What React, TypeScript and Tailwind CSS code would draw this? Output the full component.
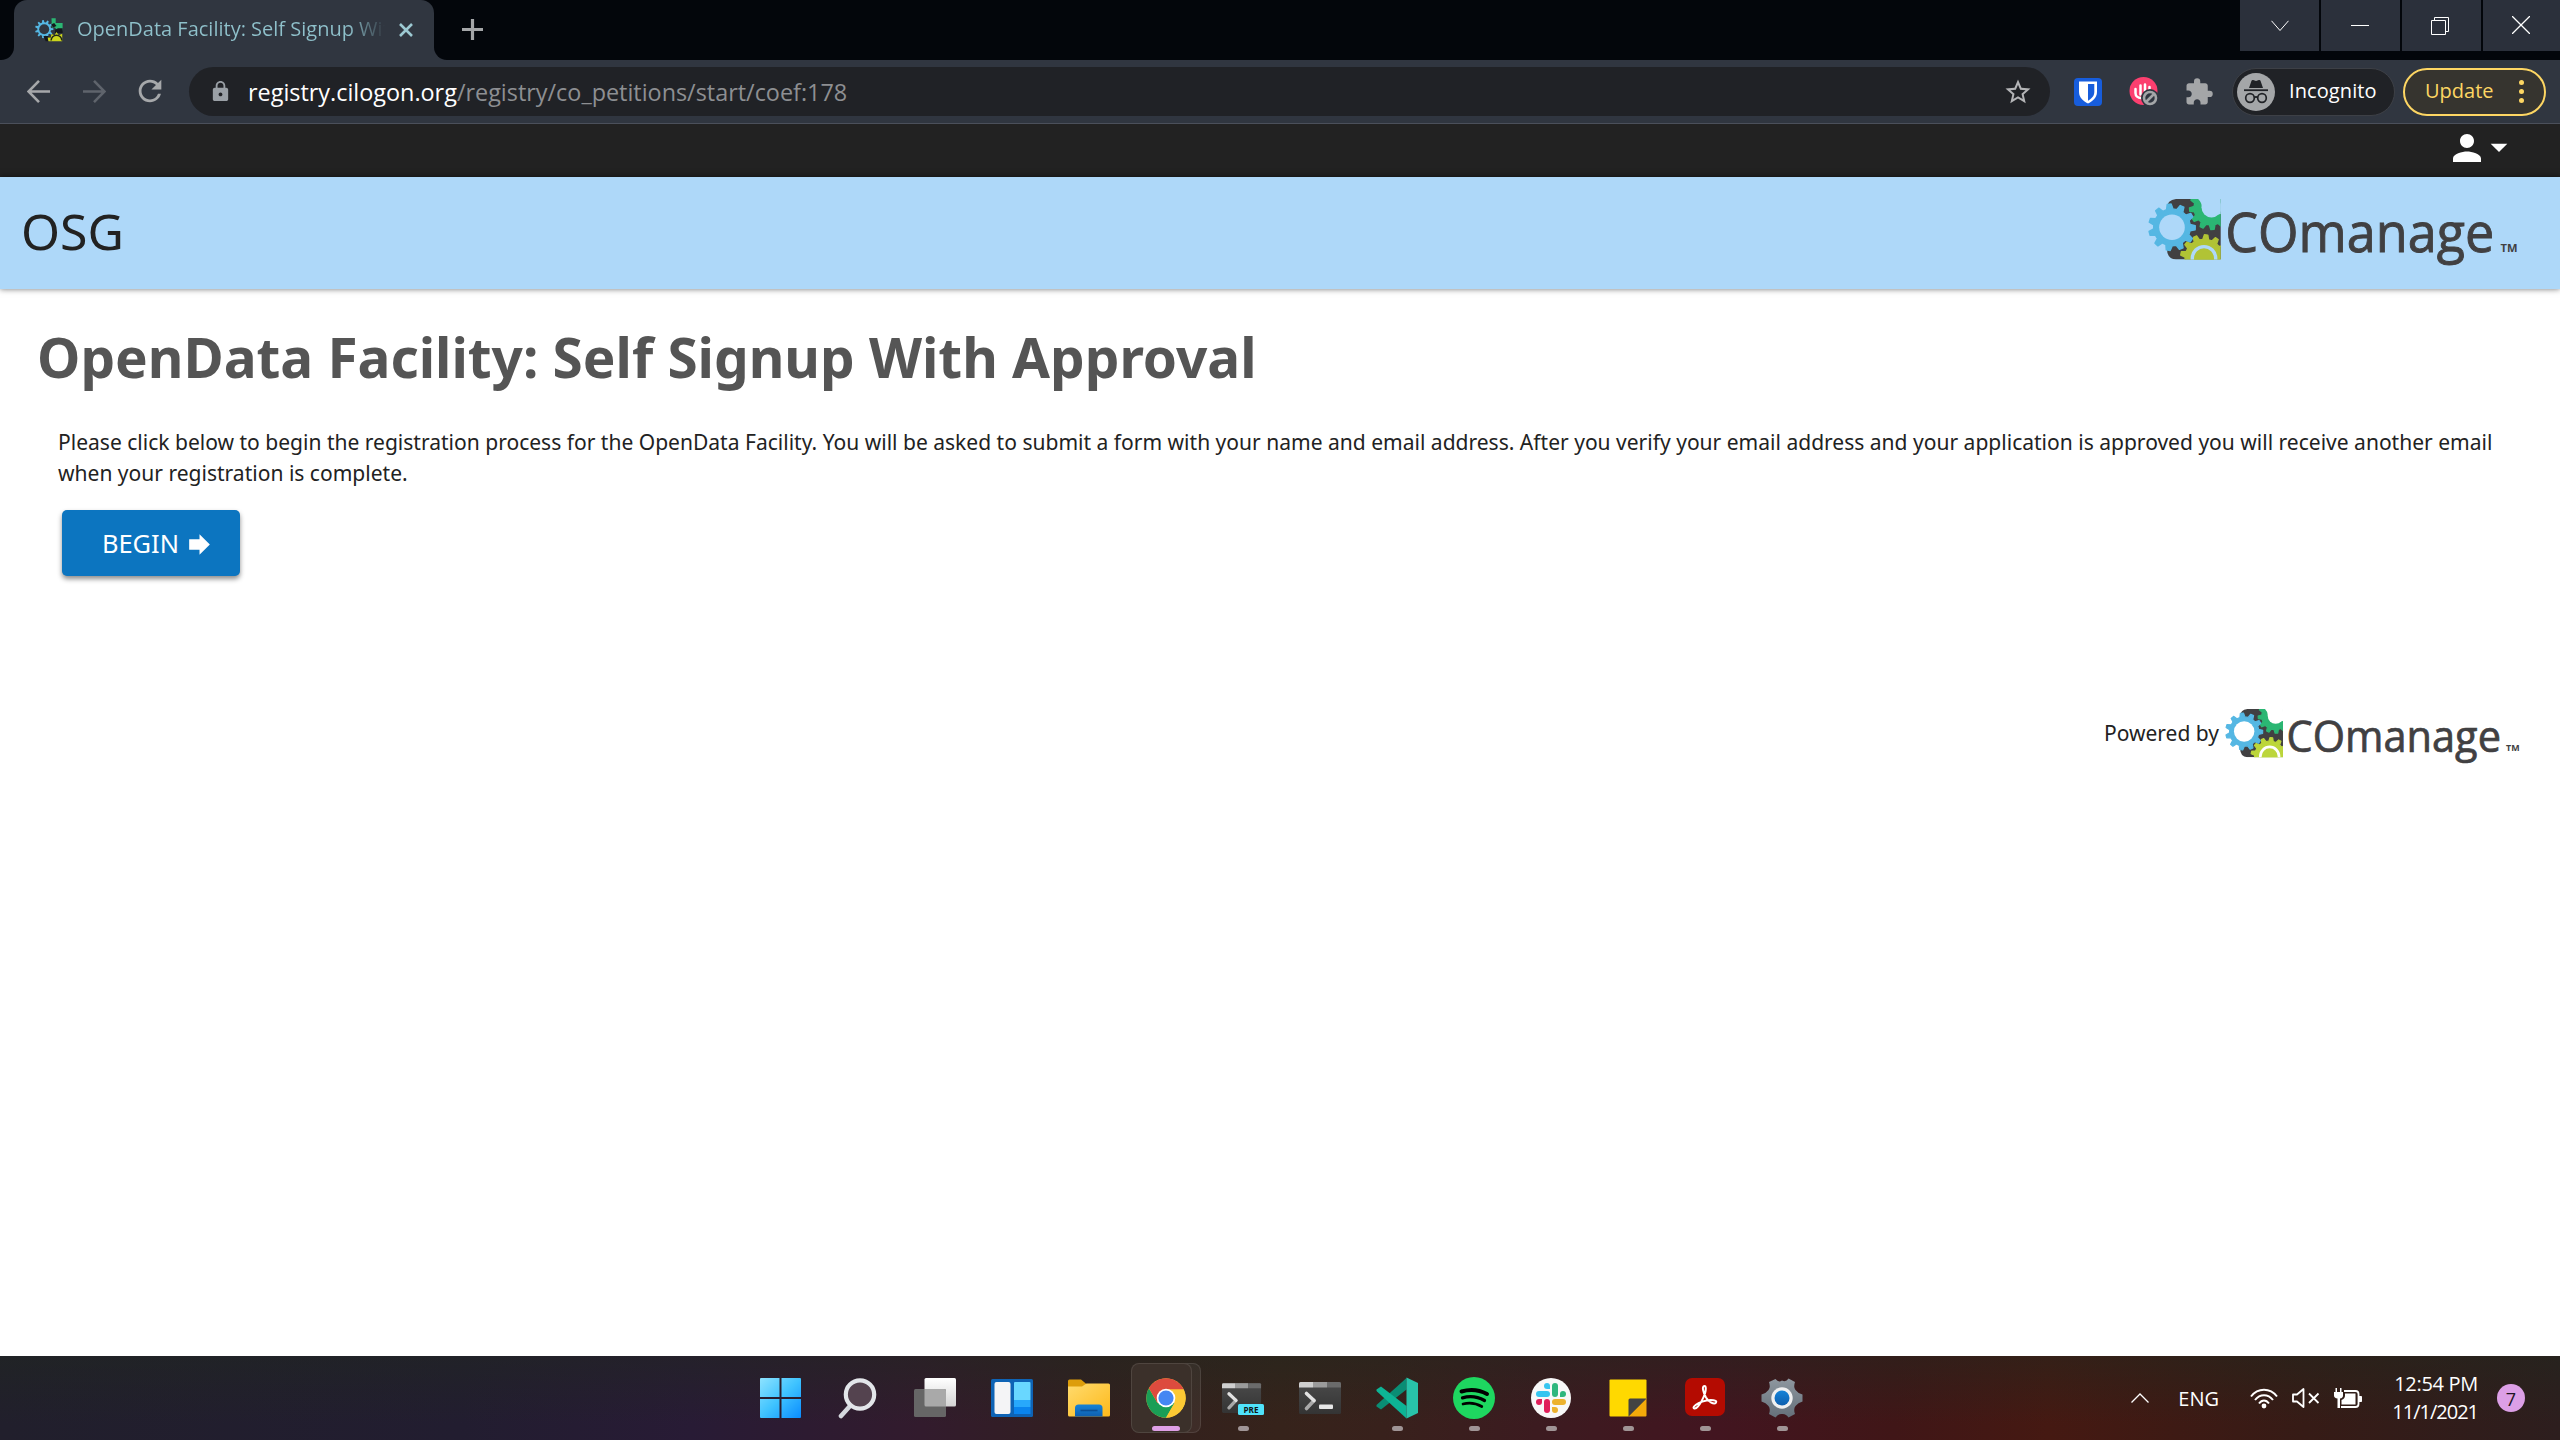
import type { ReactNode } from "react";
import {
  MdArrowDropDown,
  MdExtension,
  MdForward,
  MdLock,
  MdPerson,
  MdRefresh,
  MdStarBorder,
} from "react-icons/md";

function gearPath(cx: number, cy: number, outer: number, root: number, teeth: number, phase = 0) {
  const step = (Math.PI * 2) / teeth;
  const pts: string[] = [];
  for (let i = 0; i < teeth; i++) {
    const a = phase + i * step;
    const corners: [number, number][] = [
      [root, -0.31],
      [outer, -0.15],
      [outer, 0.15],
      [root, 0.31],
    ];
    for (const [r, k] of corners) {
      pts.push(`${(cx + r * Math.cos(a + k * step)).toFixed(2)} ${(cy + r * Math.sin(a + k * step)).toFixed(2)}`);
    }
  }
  return `M${pts.join("L")}Z`;
}

function Gears({ hole, lime, id }: { hole: string; lime: string; id: string }) {
  return (
    <g>
      <clipPath id={id}>
        <rect x="0" y="0" width="72.7" height="60.5" />
      </clipPath>
      <g clipPath={`url(#${id})`} strokeLinejoin="round">
        <path d="M28 0H73V60.5H28Q19 60 19 50V9Q19 1 28 0Z" fill="#414042" />
        <path d={gearPath(63, 9, 21.5, 17, 12, 1.5)} fill="#2bb673" stroke="#2bb673" strokeWidth="1.4" />
        <circle cx="63.500" cy="8.500" r="10" fill={hole} />
        <path d="M56 -1L49 -1Q54 3 54 9L64 16L73 15V-1z" fill={hole} />
        <path d={gearPath(56, 59.3, 23.5, 19, 13, -1.48)} fill={lime} stroke={lime} strokeWidth="1.4" />
        <circle cx="56" cy="59.3" r="11.7" fill={lime} stroke={hole} strokeWidth="3.4" />
        <path d={gearPath(24, 28.3, 23.3, 18.4, 11, 0.02)} fill="#55b7e3" stroke="#55b7e3" strokeWidth="1.4" />
        <circle cx="24" cy="28.3" r="12.8" fill={hole} />
      </g>
    </g>
  );
}

function Logo({ className, hole, lime, id }: { className: string; hole: string; lime: string; id: string }) {
  return (
    <svg viewBox="0 0 370 72" className={className} role="img" aria-label="COmanage">
      <Gears hole={hole} lime={lime} id={id} />
      <text
        x="77.2"
        y="53.3"
        fontFamily="'Open Sans', 'Noto Sans', sans-serif"
        fontSize="54"
        textLength="269"
        lengthAdjust="spacingAndGlyphs"
        fill="#414042"
        stroke="#414042"
        strokeWidth="0.9"
      >
        COmanage
      </text>
      <text x="352.5" y="53" fontFamily="'Open Sans', sans-serif" fontSize="11" fontWeight="700" textLength="17" lengthAdjust="spacingAndGlyphs" fill="#414042">
        TM
      </text>
    </svg>
  );
}

function WindowButton({ children, last }: { children: ReactNode; last?: boolean }) {
  return (
    <button className={`flex h-[51px] items-center justify-center bg-[#2b303b] ${last ? "w-[77px]" : "w-[79px]"}`}>{children}</button>
  );
}

function TabStrip() {
  return (
    <div className="flex h-[60px] bg-[#03060b]">
      <div className="h-full w-3.5 bg-[#303640]">
        <div className="h-full rounded-br-[13px] bg-[#03060b]" />
      </div>
      <div className="flex w-[420px] items-center rounded-t-[13px] bg-[#303640] pl-[21px]">
        <svg viewBox="0 0 73 61" className="h-6 w-7">
          <path d={gearPath(24, 28.3, 24, 18, 11)} fill="#55b7e3" />
          <circle cx="24" cy="28.3" r="13" fill="#303640" />
          <path d="M43 0h11v12h18v20H58l-6-8h-8z" fill="#2bb673" />
          <path d="M50 12l6 8-9 4-5-8z" fill="#15181d" />
          <path d="M60 26h12v12H52v-8z" fill="#15181d" />
          <path d="M22 46h14v14h-8z" fill="#15181d" />
          <path d="M35 60l-2-10 8 1 2-10 8 3 5-8 6 8 9-4v20z" fill="#cbd51c" />
          <path d="M42 58a14 14 0 0 1 28 0" fill="none" stroke="#23281c" strokeWidth="4" />
        </svg>
        <div className="-mt-0.5 ml-3.5 w-[308px] overflow-hidden bg-gradient-to-r from-[#8fc1cb] from-88% to-transparent bg-clip-text text-xl leading-[30px] whitespace-nowrap text-transparent">
          OpenData Facility: Self Signup With Approval
        </div>
        <svg viewBox="0 0 14 14" className="ml-3.5 size-3.5">
          <path d="M1 1l12 12M13 1L1 13" stroke="#9cc9d2" strokeWidth="2.6" />
        </svg>
      </div>
      <div className="h-full w-3.5 bg-[#303640]">
        <div className="h-full rounded-bl-[13px] bg-[#03060b]" />
      </div>
      <svg viewBox="0 0 21 21" className="mt-[19px] ml-3.5 size-[21px]">
        <path d="M10.5 0v21M0 10.5h21" stroke="#a4a6a8" strokeWidth="3.2" />
      </svg>
      <div className="ml-auto flex gap-[2px]">
        <WindowButton>
          <svg viewBox="0 0 18 12" className="h-3 w-[18px]">
            <path d="M.5 .8L9 10.5L17.500 .8" fill="none" stroke="#fff" strokeWidth="1" />
          </svg>
        </WindowButton>
        <WindowButton>
          <div className="mr-[2px] h-px w-[18px] bg-white" />
        </WindowButton>
        <WindowButton>
          <svg viewBox="0 0 18 18" className="mr-[3px] size-[18px]">
            <path d="M.5 3.500h14v14H.5zM3.500 3.500v-3h14v14h-3" fill="none" stroke="#fff" strokeWidth="1" />
          </svg>
        </WindowButton>
        <WindowButton last>
          <svg viewBox="0 0 18 18" className="mr-[2px] mb-px size-[18px]">
            <path d="M0 0L18 18M18 0L0 18" stroke="#fff" strokeWidth="1.3" />
          </svg>
        </WindowButton>
      </div>
    </div>
  );
}

function Toolbar() {
  return (
    <div className="flex h-16 items-center border-b border-[#4b505b] bg-[#303640] pl-[27px]">
      <svg viewBox="0 0 23 23" className="h-[23px] w-[23px] shrink-0">
        <path d="M12 .9L1.500 11.500L12 22.100M1.500 11.500H23" fill="none" stroke="#a6a8aa" strokeWidth="2.6" />
      </svg>
      <svg viewBox="0 0 23 23" className="ml-[33px] h-[23px] w-[23px] shrink-0">
        <path d="M11 .9L21.500 11.500L11 22.100M21.500 11.500H0" fill="none" stroke="#5f646c" strokeWidth="2.6" />
      </svg>
      <MdRefresh className="-mt-px ml-[27px] size-[34px] shrink-0 text-[#a6a8aa]" />
      <div className="ml-[22px] flex h-[49px] w-[1861px] shrink-0 items-center rounded-full bg-[#202226] pr-[17px] pl-5">
        <MdLock className="size-[23px] text-[#9aa0a6]" />
        <div className="ml-4 text-[23.4px] leading-8 text-[#8d8f92]">
          <span className="text-white">registry.cilogon.org</span>/registry/co_petitions/start/coef:178
        </div>
        <MdStarBorder className="ml-auto size-[30px] text-[#b4b5b7]" />
      </div>
      <svg viewBox="0 0 28 28" className="ml-6 size-7 shrink-0">
        <rect width="28" height="28" rx="4" fill="#175ddc" />
        <path d="M5 3.500h18V14c0 6-5 9.500-9 11.500C10 23.500 5 20 5 14z" fill="#fff" />
        <path d="M14 6h6.300v8c0 4.300-3.300 7-6.300 8.800z" fill="#175ddc" />
      </svg>
      <svg viewBox="0 0 29 29" className="ml-[27px] size-[29px] shrink-0">
        <circle cx="14.500" cy="14" r="14" fill="#fc3f6f" />
        <path d="M6.500 12v4c0 3 2.500 5 5.500 5M11.500 8.500v9M16 7.500v7M20.500 10v4" stroke="#fff" strokeWidth="2.500" fill="none" strokeLinecap="round" />
        <circle cx="21" cy="21" r="9" fill="#303640" />
        <circle cx="21" cy="21" r="6" fill="none" stroke="#a4a6a8" strokeWidth="2.600" />
        <path d="M17 25L25 17" stroke="#a4a6a8" strokeWidth="2.500" />
      </svg>
      <MdExtension className="ml-[26px] size-[30px] shrink-0 text-[#a4a6a8]" />
      <div className="ml-[18px] flex h-12 w-[163px] shrink-0 items-center rounded-full border border-[#3d4046] bg-[#202226] pl-1">
        <svg viewBox="0 0 38 38" className="size-[38px]">
          <circle cx="19" cy="19" r="19" fill="#a4a6a8" />
          <path d="M12 15l2.500-7.200q.5-1 1.700-.7l2.800.8 2.800-.8q1.200-.3 1.700.7L26 15z" fill="#202226" />
          <path d="M7 17.200h24" stroke="#202226" strokeWidth="1.800" />
          <g fill="none" stroke="#202226" strokeWidth="1.700">
            <circle cx="13" cy="25" r="4.300" />
            <circle cx="25" cy="25" r="4.300" />
            <path d="M17.300 24.500q1.700-1.200 3.400 0" />
          </g>
        </svg>
        <span className="-mt-0.5 ml-3.5 text-xl tracking-[0.1px] text-white">Incognito</span>
      </div>
      <div className="ml-2 flex h-12 w-[143px] shrink-0 items-center rounded-full border-2 border-[#fdd663] bg-[#36342f] pl-[20px]">
        <span className="-mt-0.5 text-xl text-[#fdd663]">Update</span>
        <div className="mr-[20px] ml-auto flex flex-col gap-1">
          <i className="size-[5px] rounded-full bg-[#fdd663]" />
          <i className="size-[5px] rounded-full bg-[#fdd663]" />
          <i className="size-[5px] rounded-full bg-[#fdd663]" />
        </div>
      </div>
    </div>
  );
}

function Page() {
  return (
    <main className="flex h-[1232px] flex-col bg-white font-['Noto_Sans',sans-serif] text-[#222]">
      <div className="flex h-[53px] shrink-0 items-start justify-end bg-[#222] pr-[41px] text-white">
        <MdPerson className="mt-[3px] size-[42px]" />
        <MdArrowDropDown className="mt-[3px] -ml-[9px] size-10" />
      </div>
      <header className="flex h-28 shrink-0 items-start justify-between bg-[#aed8f9] pt-[22px] pr-[42px] pl-[21px] shadow-[0_0_6px_rgba(0,0,0,0.55)]">
        <div className="mt-[7px] text-[50px] leading-none">OSG</div>
        <Logo id="header-gears" className="h-[72px] w-[370px]" hole="#aed8f9" lime="#b1c335" />
      </header>
      <div className="pt-[38px] pr-14 pl-[37px]">
        <h1 className="text-[54.9px] leading-[60px] font-bold tracking-[-0.02px] text-[#555]">OpenData Facility: Self Signup With Approval</h1>
        <p className="mt-10 ml-[21px] text-[21.04px] leading-[31px]">
          Please click below to begin the registration process for the OpenData Facility. You will be asked to submit a form with your
          name and email address. After you verify your email address and your application is approved you will receive another email
          when your registration is complete.
        </p>
        <button className="mt-[21px] ml-[25px] flex h-[66px] w-[178px] items-center rounded-[5px] bg-[#0c75c0] pl-10 text-[25.4px] text-white shadow-[0_3px_5px_rgba(0,0,0,0.45)]">
          <span className="mt-px">BEGIN</span>
          <MdForward className="mt-0.5 ml-[5px] size-[31px]" />
        </button>
      </div>
      <footer className="mt-[133px] flex items-start justify-end pr-10">
        <span className="mt-[9px] mr-[6px] text-[21px] leading-[31px]">Powered by</span>
        <Logo id="footer-gears" className="h-[57.4px] w-[295px]" hole="#ffffff" lime="#bcd63b" />
      </footer>
    </main>
  );
}

function TaskIcon({ children, running }: { children: ReactNode; running?: boolean }) {
  return (
    <div className="relative flex h-full w-[77px] items-center justify-center">
      <svg viewBox="0 0 42 42" className="size-[42px]">
        {children}
      </svg>
      {running && <i className="absolute bottom-[9px] left-[34px] h-[5px] w-[11px] rounded-full bg-[#a09596]" />}
    </div>
  );
}

function Defs() {
  return (
    <svg className="absolute size-0">
      <defs>
        <linearGradient id="win" x1="0" y1="0" x2="1" y2="1">
          <stop offset="0" stopColor="#8ee3ff" />
          <stop offset=".5" stopColor="#3fc3ff" />
          <stop offset="1" stopColor="#0a8cff" />
        </linearGradient>
        <linearGradient id="white" x1="0" y1="0" x2="0" y2="1">
          <stop offset="0" stopColor="#fff" />
          <stop offset="1" stopColor="#d4d4d4" />
        </linearGradient>
        <linearGradient id="folder" x1="0" y1="0" x2="1" y2="1">
          <stop offset="0" stopColor="#ffdb6e" />
          <stop offset="1" stopColor="#fdb91a" />
        </linearGradient>
        <linearGradient id="blue" x1="0" y1="0" x2="0" y2="1">
          <stop offset="0" stopColor="#1583d8" />
          <stop offset="1" stopColor="#0f5fae" />
        </linearGradient>
        <linearGradient id="steel" x1="0" y1="0" x2="0" y2="1">
          <stop offset="0" stopColor="#8e979f" />
          <stop offset="1" stopColor="#65707a" />
        </linearGradient>
        <linearGradient id="term" x1="0" y1="0" x2="0" y2="1">
          <stop offset="0" stopColor="#4a4a4a" />
          <stop offset="1" stopColor="#343434" />
        </linearGradient>
      </defs>
    </svg>
  );
}

function Terminal() {
  return (
    <>
      <rect y="5" width="42" height="32" rx="1.500" fill="url(#term)" />
      <path d="M0 6.500q0-1.500 1.500-1.500H14v5.500H0z" fill="#cfcfcf" />
      <path d="M14 5h14v5.500H14z" fill="#9b9b9b" />
      <path d="M28 5h12.500q1.500 0 1.500 1.500v4H28z" fill="#6b6b6b" />
      <path d="M15 23.500L7.500 31.500" stroke="#a8a8a8" strokeWidth="3.600" strokeLinecap="round" />
      <path d="M7.500 16.500L15 23.500" stroke="#e2e2e2" strokeWidth="3.600" strokeLinecap="round" />
    </>
  );
}

function ChromeIcon() {
  return (
    <svg viewBox="0 0 40 40" className="size-10">
      <circle cx="20" cy="20" r="19.700" fill="#fcc934" />
      <path d="M2.940 10.150A19.700 19.700 0 0 0 20 39.700L28.500 25L20 20L11.500 25z" fill="#1a9e56" />
      <path d="M2.940 10.150A19.700 19.700 0 0 1 37.060 10.150L37.700 11.500H20L11.500 25z" fill="#dd4b3e" />
      <path d="M37.700 11.500H20L28.500 25L20 39.700A19.700 19.700 0 0 0 37.700 11.500z" fill="#fcc934" />
      <circle cx="20" cy="20" r="9.300" fill="#fff" />
      <circle cx="20" cy="20" r="7.600" fill="#4587f3" />
    </svg>
  );
}

function Taskbar() {
  return (
    <div className="relative flex h-[84px] bg-[linear-gradient(to_right,#211f2c_0%,#221d30_18%,#281b35_27%,#321b2d_36%,#32201f_43%,#36231b_50%,#38211c_54%,#3c1b20_60%,#421520_67%,#401617_74%,#451912_80%,#361b16_90%,#2d1e1e_100%)]">
      <div className="absolute inset-0 bg-[linear-gradient(to_bottom,rgba(32,40,30,0.45),transparent_80%)]" />
      <Defs />
      <div className="relative ml-[742px] flex">
        <TaskIcon>
          <path d="M0 2q0-1 1-1H19.500v19H0zM21.500 1h18.500q1 0 1 1v18H21.500zM0 22H19.500v19H1q-1 0-1-1zM21.500 22H41v18q0 1-1 1H21.500z" fill="url(#win)" />
        </TaskIcon>
        <TaskIcon>
          <path d="M13 29L4 39" stroke="#d5d8de" strokeWidth="4.600" strokeLinecap="round" />
          <circle cx="23" cy="17.500" r="14.200" fill="#54434f" stroke="#e3e6ea" strokeWidth="4.200" />
        </TaskIcon>
        <TaskIcon>
          <rect x="10.500" y="1" width="31.500" height="28.500" rx="1.500" fill="url(#white)" />
          <rect x="0" y="12" width="32" height="28" rx="1.500" fill="#666666" />
          <path d="M10.500 12H30.500Q32 12 32 13.500V29.500H12Q10.500 29.500 10.500 28z" fill="#a9a9a9" />
        </TaskIcon>
        <TaskIcon>
          <rect y="2" width="42" height="38" rx="1.500" fill="#0e63b5" />
          <rect x="3.500" y="5" width="16" height="32" rx="2" fill="#f4f4f6" />
          <path d="M24 5h14.500q1 0 1 1v17H23V6q0-1 1-1z" fill="#69d7ff" />
          <path d="M23 23h16.500v7H23z" fill="#28a8fb" />
          <path d="M23 30h16.500v7H23z" fill="#0a84ee" />
        </TaskIcon>
        <TaskIcon>
          <path d="M0 4q0-1.500 1.500-1.500H13l6 5V14H0z" fill="#dd9d0a" />
          <path d="M0 9.500H14L18.500 6.500H40.500Q42 6.500 42 8V38q0 1.500-1.500 1.500h-39Q0 39.500 0 38z" fill="url(#folder)" />
          <path d="M7 39.500V31q0-3.500 3.500-3.500h20.500q3.500 0 3.500 3.500v8.500z" fill="url(#blue)" />
          <path d="M12.500 33.500h17" stroke="#0b4f94" strokeWidth="1.600" />
        </TaskIcon>
        <div className="relative flex h-full w-[77px] items-center">
          <div className="absolute top-[7px] left-[12px] h-[70px] w-[62px] rounded-lg border border-white/10 bg-white/5" />
          <div className="absolute top-[7px] left-1 flex h-[70px] w-[61px] items-center justify-center rounded-lg border border-white/10 bg-[#3b302a]">
            <div className="ml-2">
              <ChromeIcon />
            </div>
            <i className="absolute bottom-[1px] left-5 h-[5px] w-7 rounded-full bg-[#de9fe6]" />
          </div>
        </div>
        <TaskIcon running>
          <g transform="translate(0 1.500) scale(.93)">
            <Terminal />
          </g>
          <rect x="16" y="27" width="26" height="11" rx="1.500" fill="#4fe3fb" />
          <text x="29" y="36" textAnchor="middle" fontFamily="'Open Sans', sans-serif" fontWeight="700" fontSize="9.500" textLength="15" lengthAdjust="spacingAndGlyphs" fill="#101416">
            PRE
          </text>
        </TaskIcon>
        <TaskIcon>
          <Terminal />
          <rect x="20" y="27.500" width="14" height="4.500" rx="1" fill="#e6e6e6" />
        </TaskIcon>
        <TaskIcon running>
          <path d="M30.500 1v11.500L5 32.500L.500 29.500Q0 28.500 1 27.500z" fill="#0a8d74" />
          <path d="M.500 12.500L5 9.500L30.500 29V41.500L1 14.500Q0 13.500 .500 12.500z" fill="#0db495" />
          <path d="M30.500 .500L42 6V36L30.500 41.500z" fill="#28c3a9" />
        </TaskIcon>
        <TaskIcon running>
          <circle cx="21" cy="21" r="21" fill="#1ed760" />
          <g fill="none" stroke="#000" strokeLinecap="round">
            <path d="M8.500 14.500Q22 10.500 34 17" strokeWidth="4" />
            <path d="M9.500 20.800Q21 17.500 31.500 23.500" strokeWidth="3.300" />
            <path d="M10 27Q20 24.500 28.800 29.500" strokeWidth="2.700" />
          </g>
        </TaskIcon>
        <TaskIcon running>
          <circle cx="21" cy="21" r="20" fill="#f8f8f8" />
          <rect x="6" y="14" width="14" height="6" rx="3" fill="#36c5f0" />
          <path d="M20 12h-3a3 3 0 1 1 3-3z" fill="#36c5f0" />
          <rect x="22" y="6" width="6" height="14" rx="3" fill="#2eb67d" />
          <path d="M30 20v-3a3 3 0 1 1 3 3z" fill="#2eb67d" />
          <rect x="22" y="22" width="14" height="6" rx="3" fill="#ecb22e" />
          <path d="M22 30h3a3 3 0 1 1-3 3z" fill="#ecb22e" />
          <rect x="14" y="22" width="6" height="14" rx="3" fill="#e01e5a" />
          <path d="M12 22v3a3 3 0 1 1-3-3z" fill="#e01e5a" />
        </TaskIcon>
        <TaskIcon running>
          <path d="M2.500 3.500q0-1 1-1h35q1 0 1 1V21.500L21.500 39.500H3.500q-1 0-1-1z" fill="#ffd900" />
          <path d="M39.500 21.500L21.500 39.500h17q1 0 1-1z" fill="#f3aa0a" />
          <path d="M39.500 21.500H23q-1.500 0-1.500 1.500v16.500z" fill="#434343" />
        </TaskIcon>
        <TaskIcon running>
          <rect x="1" y="1" width="40" height="38" rx="7" fill="#b40b01" />
          <path
            d="M20.500 9c-3.200 0-1 7 1.500 11.500c2.600 4.400 8 7.600 10 5.200c1.700-2.600-5-3.300-9.500-2.200c-4.500 1-10.500 3.500-12.500 6c-1.600 2 1.300 3.200 3.800.2C17 26 19.500 20.500 21 16.500c1-3.500 1.300-7.500-.5-7.500z"
            fill="none"
            stroke="#fff"
            strokeWidth="2"
          />
        </TaskIcon>
        <TaskIcon running>
          <path
            d="M14.500 2q3 4 6.500 1.500Q25 5.500 27.500 1.500L34 5q-1.800 5.500 .5 8q2.500 3.500 7 4.500v7q-4.500 1-7 4.500q-2.300 3-.5 8l-6.500 3.500Q25 36.500 21 37q-3.500-.500-6.500 3.500L8 37q1.800-5-.500-8Q5 25.500 .500 24.500v-7Q5 16.500 7.500 13Q9.800 10.500 8 5z"
            fill="url(#steel)"
          />
          <circle cx="21" cy="21" r="10.700" fill="#f0f0f0" />
          <circle cx="21" cy="21" r="7.500" fill="url(#blue)" />
        </TaskIcon>
      </div>
      <div className="relative ml-auto flex items-center pr-[35px] text-xl text-white">
        <svg viewBox="0 0 18 10" className="h-2.5 w-[18px]">
          <path d="M.500 9.500L9 1L17.500 9.500" fill="none" stroke="#fff" strokeWidth="1.300" />
        </svg>
        <span className="mt-0.5 ml-[29px]">ENG</span>
        <svg viewBox="0 0 28 21" className="ml-[31px] h-[21px] w-7" fill="none" stroke="#fff" strokeWidth="2">
          <path d="M1 8.500C8 -.500 20 -.500 27 8.500" />
          <path d="M5 12C10 5.500 18 5.500 23 12" />
          <path d="M9 15.500C12 11.500 16 11.500 19 15.500" />
          <circle cx="14" cy="18" r="2.400" fill="#fff" stroke="none" />
        </svg>
        <svg viewBox="0 0 28 22" className="ml-3.5 h-[22px] w-7" fill="none" stroke="#fff" strokeWidth="1.800">
          <path d="M1 7.500h4L11.500 2V20L5 14.500H1z" strokeLinejoin="round" />
          <path d="M17 6.500l9.500 9.500M26.500 6.500L17 16" />
        </svg>
        <svg viewBox="0 0 28 22" className="ml-3.5 h-[22px] w-7">
          <path d="M1.500 1v4H0v3.500Q0 11 3.500 11.500V21H6V11.500Q9 11 9 8.500V5H7.500V1H6V5H3V1z" fill="#fff" />
          <path d="M10 4H21.500Q24.500 4 24.500 7V17Q24.500 20 21.500 20H7" fill="none" stroke="#fff" strokeWidth="1.800" />
          <path d="M11 6.500H21.500V17.500H7.500V13Q11 11.500 11 8.500z" fill="#fff" />
          <path d="M25 9h2.200q.8 0 .8 .8v4.400q0 .8-.8 .8H25z" fill="#fff" />
        </svg>
        <div className="ml-[33px] flex w-[83px] flex-col items-end leading-7 whitespace-nowrap">
          <span className="tracking-[-0.3px]">12:54 PM</span>
          <span className="tracking-[-1px]">11/1/2021</span>
        </div>
        <span className="ml-[19px] flex size-7 items-center justify-center rounded-full bg-[#dc9fe6] pt-px text-lg leading-none text-[#1c1420]">7</span>
      </div>
    </div>
  );
}

export default function App() {
  return (
    <div className="h-[1440px] w-[2560px] overflow-hidden bg-white font-['Open_Sans','Noto_Sans',sans-serif]">
      <TabStrip />
      <Toolbar />
      <Page />
      <Taskbar />
    </div>
  );
}
